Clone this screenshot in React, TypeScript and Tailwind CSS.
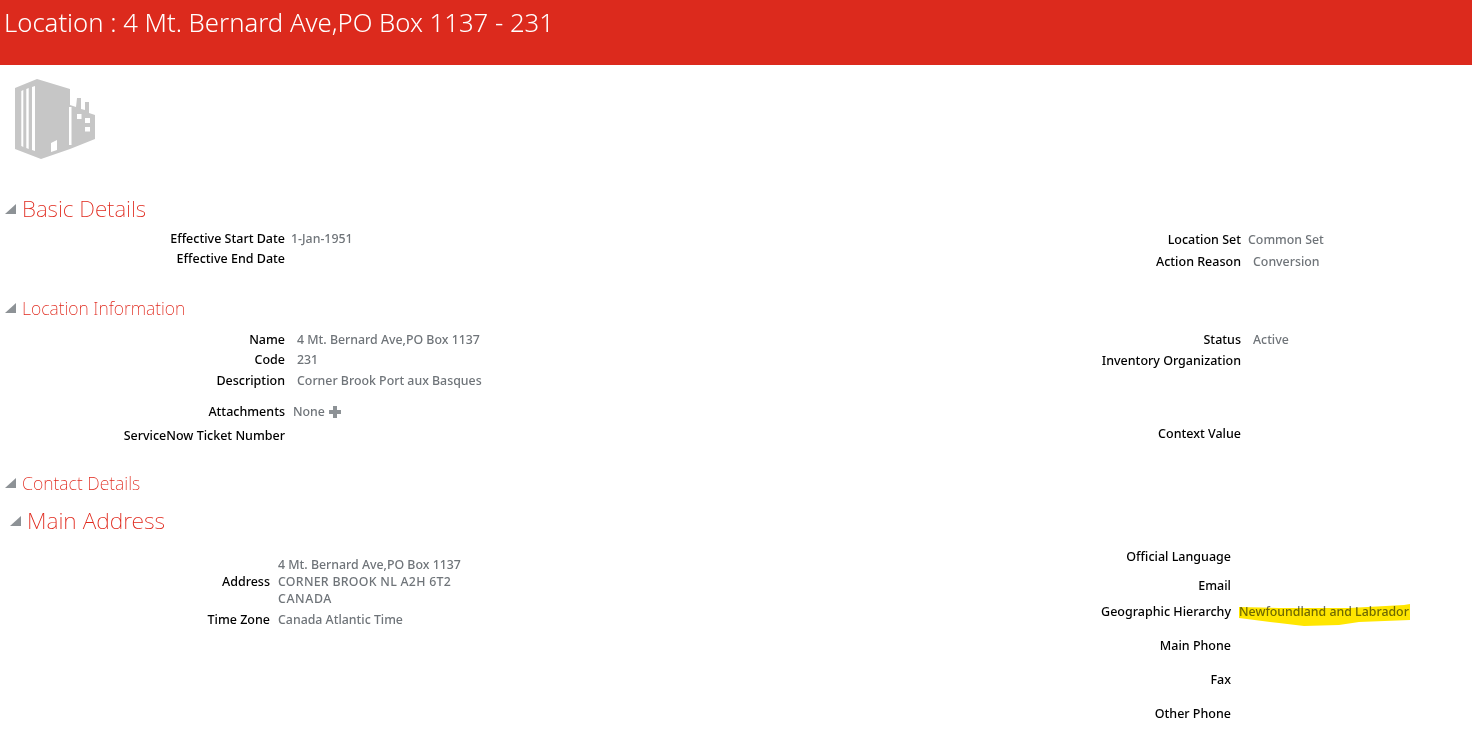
const labelClass = "shrink-0 text-right text-[12.5px] leading-[18px] font-medium text-black";
const valueClass = "text-[12.35px] font-medium text-[#6f7479]";

function Caret() {
  return (
    <svg width="12" height="12" viewBox="0 0 12 12" className="shrink-0">
      <path d="M11 1V11H0z" fill="#8d9296" />
    </svg>
  );
}

function SectionTitle({ title, className, textClass }: { title: string; className: string; textClass: string }) {
  return (
    <div className={"flex items-center " + className}>
      <Caret />
      <h2 className={"font-extralight text-[#e0281c] " + textClass}>{title}</h2>
    </div>
  );
}

function Field({ label, value, width, gap, className = "" }: { label: string; value?: string; width: string; gap: string; className?: string }) {
  return (
    <div className={"flex items-center " + className}>
      <div className={labelClass + " " + width}>{label}</div>
      {value && <div className={valueClass + " leading-[18px] " + gap}>{value}</div>}
    </div>
  );
}

function BuildingLogo() {
  return (
    <svg width="96" height="92" viewBox="0 0 96 92" className="ml-[8px] mt-[7px] block">
      <path
        d="M7 16 29 7 62 17V33L68 35 69 26H73V37L77 38V30H81V41L87 43V67L62 77 33 87 7 77z"
        fill="#c6c6c6"
      />
      <g fill="#fff">
        <path d="M13.3 19 15.3 18V75L13.3 74z" />
        <path d="M18.3 17 20.7 16V77L18.3 76z" />
        <path d="M24 15 27 14V79L24 78z" />
        <path d="M43 71 49 68V78L43 80z" />
        <rect x="61" y="35" width="2.5" height="38" />
        <rect x="69" y="42" width="4.5" height="5" />
        <rect x="77" y="46" width="5" height="5" />
        <rect x="77" y="55" width="5" height="4.5" />
      </g>
    </svg>
  );
}

export default function App() {
  return (
    <div className="relative h-[730px] w-[1472px] overflow-hidden bg-white font-['Noto_Sans','Open_Sans',sans-serif]">
      <header className="h-[65px] bg-[#dc2a1d] pl-[4px] pt-[4px]">
        <h1 className="text-[25.7px] leading-[38px] font-light text-white">Location : 4 Mt. Bernard Ave,PO Box 1137 - 231</h1>
      </header>

      <BuildingLogo />

      <SectionTitle title="Basic Details" className="mt-[30px] h-[30px] gap-[5px] pl-[5px]" textClass="text-[22.4px]" />
      <div className="grid grid-cols-[1000px_1fr]">
        <div>
          <Field label="Effective Start Date" value="1-Jan-1951" width="w-[285px]" gap="ml-[6px]" className="mt-[5px] h-[20px]" />
          <Field label="Effective End Date" width="w-[285px]" gap="" className="h-[20px]" />
        </div>
        <div>
          <Field label="Location Set" value="Common Set" width="w-[241px]" gap="ml-[7px]" className="mt-[5px] h-[22px]" />
          <Field label="Action Reason" value="Conversion" width="w-[241px]" gap="ml-[12px]" className="h-[22px]" />
        </div>
      </div>

      <SectionTitle title="Location Information" className="mt-[22px] h-[26px] gap-[5px] pl-[5px]" textClass="text-[17.6px]" />
      <div className="grid grid-cols-[1000px_1fr]">
        <div>
          <Field label="Name" value="4 Mt. Bernard Ave,PO Box 1137" width="w-[285px]" gap="ml-[12px]" className="mt-[9px] h-[20px]" />
          <Field label="Code" value="231" width="w-[285px]" gap="ml-[12px]" className="h-[20px]" />
          <Field label="Description" value="Corner Brook Port aux Basques" width="w-[285px]" gap="ml-[12px]" className="h-[21px]" />
          <div className="mt-[10px] flex h-[21px] items-center">
            <div className={labelClass + " w-[285px]"}>Attachments</div>
            <div className={valueClass + " ml-[8px] leading-[18px]"}>None</div>
            <svg width="14" height="14" viewBox="0 0 14 14" className="ml-[3px]">
              <path d="M5 1h4v4h4v4H9v4H5V9H1V5h4z" fill="#8d9296" />
            </svg>
          </div>
          <Field label="ServiceNow Ticket Number" width="w-[285px]" gap="" className="mt-[3px] h-[21px]" />
        </div>
        <div>
          <Field label="Status" value="Active" width="w-[241px]" gap="ml-[12px]" className="mt-[9px] h-[20px]" />
          <Field label="Inventory Organization" width="w-[241px]" gap="" className="h-[21px]" />
          <Field label="Context Value" width="w-[241px]" gap="" className="mt-[52px] h-[21px]" />
        </div>
      </div>

      <SectionTitle title="Contact Details" className="mt-[24px] h-[26px] gap-[5px] pl-[5px]" textClass="text-[17.7px]" />
      <SectionTitle title="Main Address" className="mt-[8px] h-[34px] gap-[5px] pl-[10px]" textClass="text-[22.9px]" />

      <div className="grid grid-cols-[1000px_1fr]">
        <div>
          <div className="mt-[18px] flex items-center">
            <div className={labelClass + " w-[270px]"}>Address</div>
            <div className={valueClass + " ml-[8px] leading-[17px]"}>
              <div>4 Mt. Bernard Ave,PO Box 1137</div>
              <div className="tracking-[0.27px]">CORNER BROOK NL A2H 6T2</div>
              <div className="tracking-[0.6px]">CANADA</div>
            </div>
          </div>
          <Field label="Time Zone" value="Canada Atlantic Time" width="w-[270px]" gap="ml-[8px]" className="mt-[3px] h-[20px]" />
        </div>
        <div>
          <Field label="Official Language" width="w-[231px]" gap="" className="mt-[8px] h-[22px]" />
          <Field label="Email" width="w-[231px]" gap="" className="mt-[7px] h-[22px]" />
          <div className="relative mt-[4px] flex h-[22px] items-center">
            <div className={labelClass + " w-[231px]"}>Geographic Hierarchy</div>
            <div className={valueClass + " ml-[8px] leading-[18px]"}>Newfoundland and Labrador</div>
            <svg width="172" height="23" viewBox="0 0 172 23" className="absolute left-[239px] top-[3px] mix-blend-multiply">
              <path d="M0 3 40 4 110 4 165 1 171 0V16L120 18 100 21 65 22 40 19 0 14z" fill="#ffe600" />
            </svg>
          </div>
          <Field label="Main Phone" width="w-[231px]" gap="" className="mt-[12px] h-[22px]" />
          <Field label="Fax" width="w-[231px]" gap="" className="mt-[12px] h-[22px]" />
          <Field label="Other Phone" width="w-[231px]" gap="" className="mt-[12px] h-[22px]" />
        </div>
      </div>
    </div>
  );
}
